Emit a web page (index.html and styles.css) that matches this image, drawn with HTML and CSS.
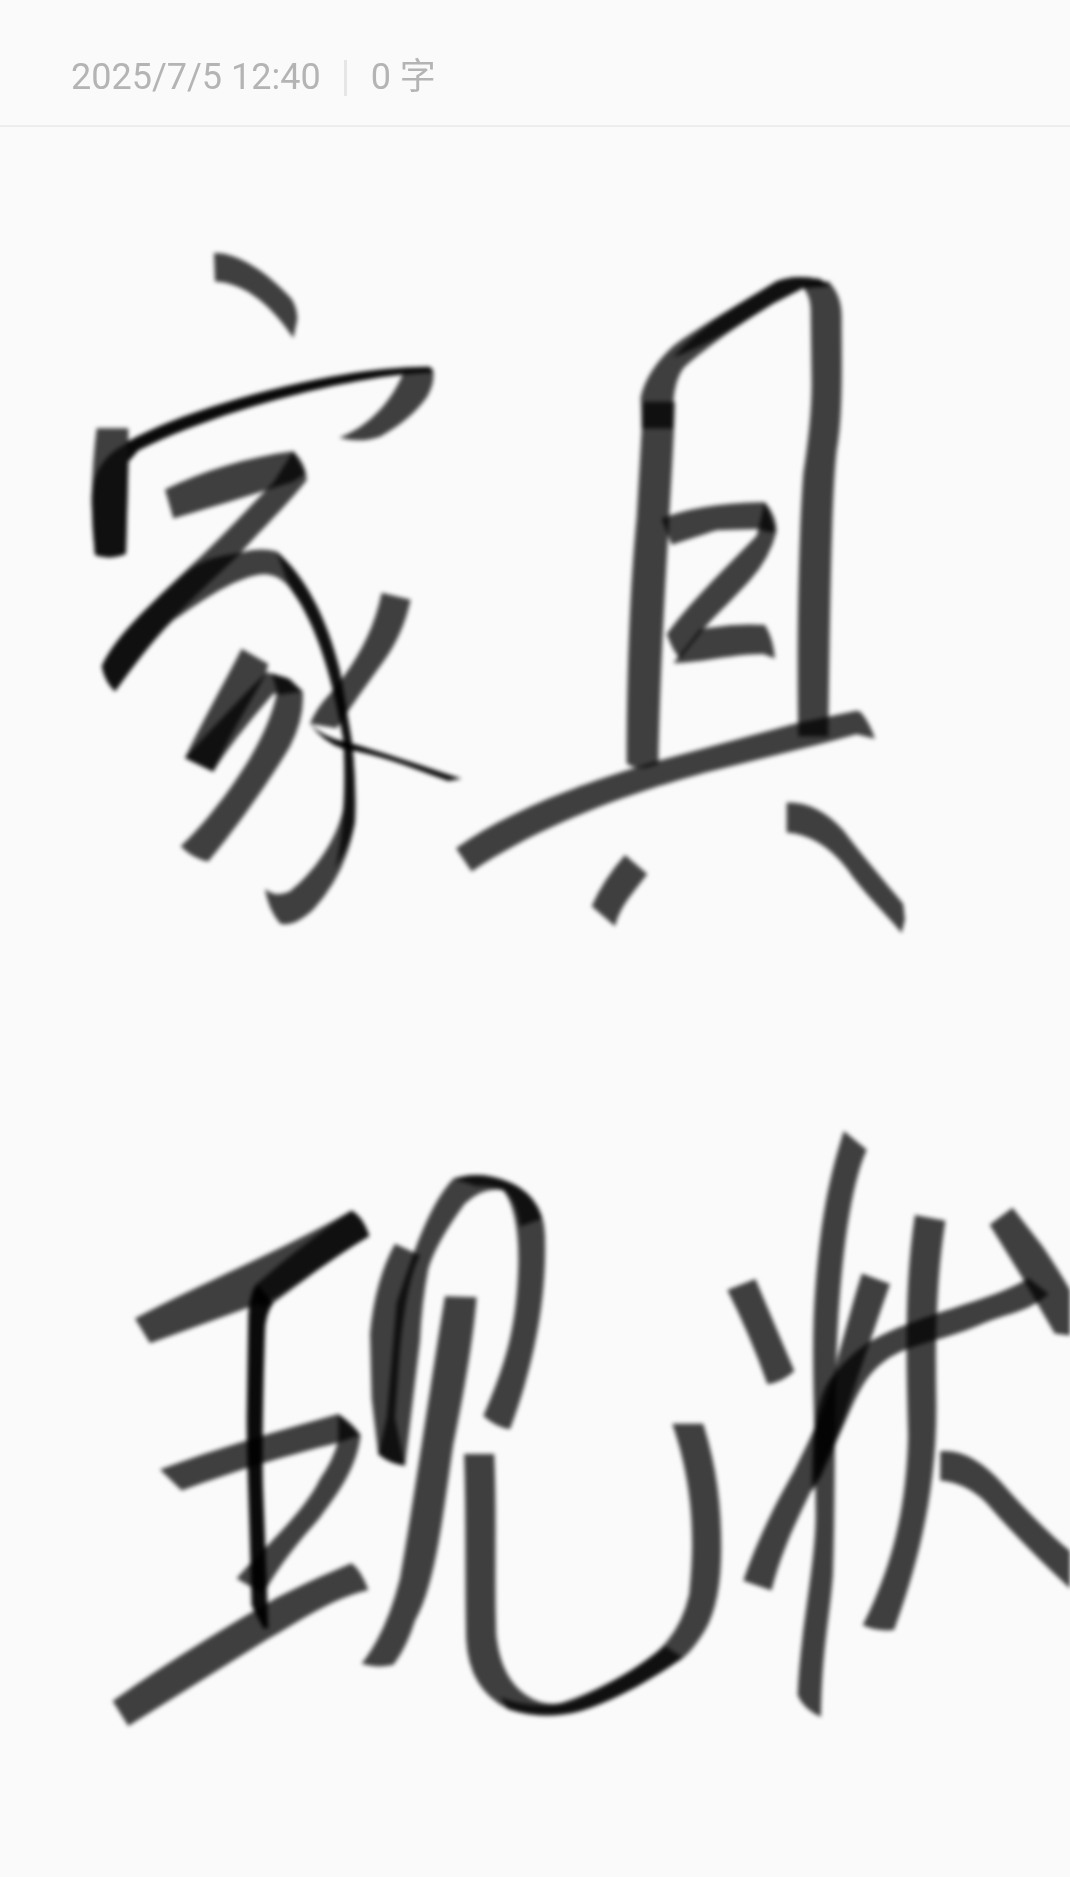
FILE: index.html
```html
<!DOCTYPE html>
<html lang="zh">
<head>
<meta charset="utf-8">
<title>笔记</title>
<link rel="stylesheet" href="styles.css">
</head>
<body>
<header class="meta">
  <span class="meta-date">2025/7/5 12:40</span>
  <span class="meta-sep"></span>
  <span class="meta-count">0 字</span>
</header>
<svg class="ink" viewBox="0 127 1070 1750" width="1070" height="1750" aria-label="手写：家具现状">
  <defs>
    <filter id="soft" filterUnits="userSpaceOnUse" x="0" y="127" width="1070" height="1750">
      <feGaussianBlur stdDeviation="2.3"/>
    </filter>
  </defs>
  <g filter="url(#soft)">
    <!-- 家 -->
    <g transform="translate(60 230) scale(.3333 .4592)">
      <path class="s" d="M462 50C530 48 620 90 695 150Q712 170 712 195L700 235C640 170 560 115 465 112Z"/>
      <path class="s" d="M110 432L205 432L205 520L198 705Q150 720 105 708Q95 640 95 580Q98 500 110 432Z"/>
      <path class="s" d="M105 708Q95 640 95 580Q100 500 200 465L205 500L198 705Q150 720 105 708Z"/>
      <path class="k" d="M200 462C400 380 850 295 1110 298L1120 310C900 315 500 385 235 480L205 505Z"/>
      <path class="s" d="M1030 312L1118 302Q1128 330 1100 365Q1050 415 960 450Q900 465 838 452C920 430 990 380 1030 312Z"/>
      <path class="s" d="M315 565C430 525 560 495 700 482L735 530L700 548C580 575 450 605 340 628Z"/>
      <path class="s" d="M700 482Q740 510 740 545C680 600 620 640 540 705C460 760 400 800 320 860C270 900 210 960 165 1005Q135 985 125 950C170 880 280 810 380 740C470 680 560 610 640 550Z"/>
      <path class="s" d="M125 950C170 880 280 810 380 745C430 715 480 710 540 703Q600 690 650 700C730 750 800 840 840 960L875 1110Q890 1200 885 1290Q860 1400 760 1480Q700 1520 660 1510Q625 1480 615 1435Q650 1455 690 1440C760 1400 830 1330 850 1260Q860 1200 850 1110C820 980 770 860 700 790Q660 745 600 750C520 760 440 800 340 850C270 900 210 960 165 1005Q135 985 125 950Z"/>
      <path class="s" d="M650 700C730 750 800 840 840 960L875 1110Q890 1200 885 1290Q870 1340 825 1390Q860 1300 850 1110C820 980 770 860 700 790Q680 765 650 700Z"/>
      <path class="s" d="M965 790L1052 805Q1030 880 970 940C920 990 880 1030 830 1085L750 1075Q770 1040 810 1010C880 950 940 880 965 790Z"/>
      <path class="k" d="M750 1075Q790 1105 860 1115C960 1135 1080 1165 1205 1195L1165 1200C1050 1170 950 1140 850 1130Q790 1115 750 1075Z"/>
      <path class="s" d="M545 912L625 945L615 970C570 1030 500 1110 460 1180L375 1150C420 1080 490 990 545 912Z"/>
      <path class="s" d="M375 1150C450 1090 540 1020 620 963L680 975L728 1005Q735 1060 690 1125C620 1210 520 1310 445 1375Q400 1370 362 1342C440 1290 520 1210 570 1150C610 1100 640 1050 650 1010L640 1010C580 1060 500 1130 460 1180Z"/>
      <path class="s" d="M635 965L690 978L728 1005L655 1012Z"/>
    </g>
    <!-- 具 -->
    <g transform="translate(440 250) scale(.3333 .4464)">
      <path class="s" d="M605 400L602 330Q620 270 700 215C780 170 900 120 1010 70Q1060 55 1140 65L1170 80L1090 85L1000 120C880 175 770 235 730 265Q705 290 700 340L700 400Z"/>
      <path class="s" d="M700 240C780 170 900 120 1010 70Q1060 55 1140 65L1170 80L1090 85L1000 120C900 165 800 215 700 240Z"/>
      <path class="s" d="M610 340L705 340C700 500 665 800 655 1150Q600 1170 560 1150C560 950 570 750 590 600Z"/>
      <path class="s" d="M1085 80L1165 70Q1205 100 1205 150C1205 250 1210 370 1190 450C1175 550 1170 800 1165 1090L1075 1090C1070 900 1075 650 1090 500Q1115 380 1115 300L1112 130Q1110 100 1085 80Z"/>
      <path class="s" d="M48 1340C200 1260 400 1200 650 1145L1070 1060L1250 1032L1262 1035Q1290 1060 1305 1095L1250 1085L1150 1105L800 1170C550 1220 300 1290 95 1392Z"/>
      <path class="s" d="M665 602C750 575 880 565 975 565L1005 625Q1000 640 960 625L830 628L695 660Z"/>
      <path class="s" d="M975 565Q1010 595 1010 630Q990 690 930 740C870 790 810 830 790 850L720 915Q700 900 680 860C760 780 860 710 950 640Z"/>
      <path class="s" d="M700 925L780 850Q880 835 975 840Q1000 870 1005 915L970 905C880 905 780 925 700 925Z"/>
      <path class="s" d="M555 1355L622 1398C580 1440 540 1470 525 1515L455 1470Q490 1410 555 1355Z"/>
      <path class="s" d="M1040 1238Q1130 1235 1210 1300C1270 1360 1340 1420 1390 1465L1395 1500L1385 1530C1330 1480 1270 1440 1220 1385Q1140 1310 1040 1305Z"/>
    </g>
    <!-- 現 left -->
    <g transform="translate(100 1150) scale(.3333 .3827)">
      <path class="s" d="M105 440C300 350 550 260 755 158Q790 175 808 225C720 270 640 320 530 385L150 505Z"/>
      <path class="s" d="M470 350Q600 250 755 158Q790 175 808 225C700 280 600 350 520 400L480 410Z"/>
      <path class="k" d="M470 350L520 400Q495 430 495 480C490 620 485 800 490 900C495 1000 500 1130 505 1250L490 1250L455 1190C450 1000 440 800 440 700L445 430Q450 370 470 350Z"/>
      <path class="s" d="M180 835C350 780 550 730 715 690L780 745L715 765C550 800 400 840 245 890Z"/>
      <path class="s" d="M715 690Q760 715 782 745C770 830 720 890 660 960C600 1020 540 1080 490 1160L410 1120C490 1040 610 950 660 860Q700 810 715 760Z"/>
      <path class="s" d="M38 1440C200 1340 370 1250 530 1170C620 1130 700 1100 755 1080Q785 1100 805 1150C700 1170 600 1230 500 1280L85 1505Z"/>
      <path class="s" d="M885 245L960 275Q920 340 900 520L885 700L915 825Q870 820 835 795L815 650L810 480Q825 340 885 245Z"/>
      <path class="s" d="M835 795L860 700Q880 500 890 400Q920 320 945 260Q1000 130 1060 75Q1130 55 1200 75Q1330 110 1335 220C1340 350 1320 520 1230 730Q1190 725 1150 695C1210 570 1250 480 1255 300Q1258 160 1210 105Q1150 95 1095 140Q1010 240 985 310Q965 400 960 500L915 825Q870 820 835 795Z"/>
      <path class="s" d="M1060 75Q1130 55 1200 75Q1300 100 1325 180L1260 200Q1250 130 1210 105Q1160 90 1130 95Z"/>
      <path class="s" d="M1035 382L1130 385C1120 500 1090 640 1060 770C1030 940 1010 1130 945 1230Q920 1300 880 1345Q830 1355 785 1342Q860 1260 900 1120C930 980 990 620 1035 382Z"/>
    </g>
    <!-- 現 right, 状 -->
    <g transform="translate(440 1120) scale(.4018 .3954)">
      <path class="s" d="M60 845L135 845C142 1000 135 1150 140 1300Q150 1410 215 1455Q265 1490 330 1470C400 1440 480 1395 540 1345Q600 1290 620 1200C630 1100 640 950 578 768L655 768C690 880 700 980 700 1080Q700 1220 660 1290Q630 1340 605 1360C520 1420 430 1470 350 1495Q260 1520 170 1490Q70 1440 65 1310C62 1150 65 1000 60 845Z"/>
      <path class="s" d="M150 1460Q230 1490 300 1475C400 1440 480 1395 560 1330L605 1360C520 1420 430 1470 350 1495Q260 1520 170 1490Z"/>
      <path class="s" d="M715 430L785 402Q830 510 882 635Q850 665 815 668Q770 540 715 430Z"/>
      <path class="s" d="M1005 28L1062 75C1020 170 1000 350 990 520C980 700 985 950 978 1150C970 1260 950 1340 948 1510Q905 1490 890 1455C895 1300 935 1120 935 1000C935 800 925 650 930 500C940 300 960 170 1005 28Z"/>
      <path class="s" d="M1050 388L1120 415C1080 530 1040 650 1000 770C960 870 890 1000 860 1080Q840 1130 825 1190L755 1165C790 1060 840 960 880 890C930 790 975 690 990 600C1010 530 1030 450 1050 388Z"/>
      <path class="s" d="M975 650C1030 580 1080 545 1180 510C1280 470 1380 450 1465 400L1515 440C1460 490 1400 490 1340 520C1260 555 1180 565 1120 600C1060 640 1040 690 1010 760L950 900L925 940C925 800 935 700 975 650Z"/>
      <path class="s" d="M1182 240L1258 255C1240 370 1232 500 1235 700C1240 950 1180 1150 1130 1290Q1090 1295 1052 1278C1120 1140 1160 1000 1165 800C1160 600 1155 420 1182 240Z"/>
      <path class="s" d="M1368 265L1425 222L1500 320Q1540 380 1568 430L1568 545L1530 540L1450 400Z"/>
      <path class="s" d="M1245 838Q1320 830 1400 920C1460 990 1520 1050 1568 1090L1568 1185C1500 1120 1430 1050 1370 980Q1320 920 1245 912Z"/>
    </g>
  </g>
</svg>
</body>
</html>
```

FILE: styles.css
```css
html, body {
  margin: 0;
  padding: 0;
  background: #fafafa;
}

body {
  width: 1070px;
  height: 1877px;
  overflow: hidden;
}

.meta {
  box-sizing: border-box;
  height: 127px;
  padding: 47px 0 0 71px;
  display: flex;
  align-items: baseline;
  border-bottom: 2px solid #ededed;
  color: #b4b4b4;
  font-family: Roboto, "Noto Sans CJK SC", sans-serif;
  font-size: 36px;
}

.meta-date,
.meta-count {
  filter: blur(0.4px);
  white-space: nowrap;
}

.meta-sep {
  align-self: flex-start;
  width: 3px;
  height: 36px;
  margin: 13px 24px 0 23px;
  background: #e6e6e6;
}

.ink {
  display: block;
}

.s {
  fill: #000;
  fill-opacity: 0.75;
}

.k {
  fill: #000;
  fill-opacity: 0.96;
}
```
